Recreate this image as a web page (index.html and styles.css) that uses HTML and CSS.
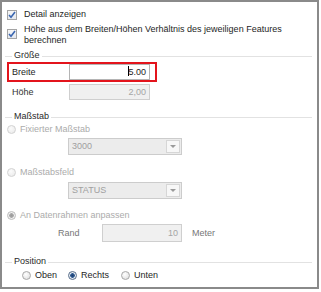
FILE: index.html
```html
<!DOCTYPE html>
<html lang="de">
<head>
  <meta charset="UTF-8">
  <title>Detail-Eigenschaften</title>
  <link rel="stylesheet" href="styles.css">
</head>
<body>
  <div class="panel">

    <!-- Checkboxes -->
    <div class="opt first">
      <span class="check"><svg width="8" height="8" viewBox="0 0 8 8"><path d="M1 4 L3 6.2 L7 1" fill="none" stroke="#3a66b0" stroke-width="1.6"/></svg></span>
      <span>Detail anzeigen</span>
    </div>
    <div class="opt multi">
      <span class="check"><svg width="8" height="8" viewBox="0 0 8 8"><path d="M1 4 L3 6.2 L7 1" fill="none" stroke="#3a66b0" stroke-width="1.6"/></svg></span>
      <span>Höhe aus dem Breiten/Höhen Verhältnis des jeweiligen Features berechnen</span>
    </div>

    <!-- Größe -->
    <div class="group g-size"><span class="legend">Größe</span></div>
    <div class="field highlight">
      <span class="label">Breite</span>
      <span class="input active"><span class="caret"></span>5.00</span>
    </div>
    <div class="field plain">
      <span class="label">Höhe</span>
      <span class="input disabled">2,00</span>
    </div>

    <!-- Maßstab -->
    <div class="group g-scale"><span class="legend">Maßstab</span></div>
    <div class="opt radio-row off r-fixed">
      <span class="radio"></span><span>Fixierter Maßstab</span>
    </div>
    <div class="combo c-first"><span class="combo-text">3000</span><span class="combo-btn"><span class="arrow"></span></span></div>
    <div class="opt radio-row off r-field">
      <span class="radio"></span><span>Maßstabsfeld</span>
    </div>
    <div class="combo c-second"><span class="combo-text">STATUS</span><span class="combo-btn"><span class="arrow"></span></span></div>
    <div class="opt radio-row off r-fit">
      <span class="radio checked-off"></span><span>An Datenrahmen anpassen</span>
    </div>
    <div class="margin-row">
      <span class="rand">Rand</span>
      <span class="input disabled wide">10</span>
      <span class="unit">Meter</span>
    </div>

    <!-- Position -->
    <div class="group g-pos"><span class="legend">Position</span></div>
    <div class="pos-row">
      <span class="pos"><span class="radio"></span>Oben</span>
      <span class="pos"><span class="radio checked"></span>Rechts</span>
      <span class="pos"><span class="radio"></span>Unten</span>
    </div>

  </div>
</body>
</html>
```

FILE: styles.css
```css
body {
  margin: 0;
  background: #fff;
  font-family: "Liberation Sans", Arial, sans-serif;
  font-size: 9px;
  line-height: 11px;
  color: #1e1e1e;
}
.panel {
  width: 315px;
  height: 285px;
  border: 2px solid #8a8a8a;
  background: #fff;
  overflow: hidden;
}

/* check rows */
.opt {
  display: flex;
  align-items: center;
  padding-left: 5px;
  height: 11px;
}
.opt.first {
  margin-top: 7px;
}
.opt.multi {
  margin-top: 4px;
  height: 22px;
  align-items: flex-start;
  padding-right: 34px;
}
.opt.multi .check {
  margin-top: 5px;
}
.check {
  width: 8px;
  height: 8px;
  border: 1px solid #a4a4a4;
  background: linear-gradient(#f6f6f6, #e4e8ef);
  margin-right: 7px;
  flex: none;
  display: flex;
}

/* group headers */
.group {
  height: 10px;
  display: flex;
  align-items: center;
  margin: 0 5px 0 3px;
}
.group::before {
  content: "";
  width: 7px;
  border-top: 1px solid #e2e2e2;
  margin-top: 3px;
}
.group::after {
  content: "";
  flex: 1;
  border-top: 1px solid #e2e2e2;
  margin-top: 3px;
}
.legend {
  padding: 0 2px;
  color: #2a2a2a;
}
.g-size { margin-top: 4px; }
.g-scale { margin-top: 11px; }
.g-pos { margin-top: 14px; }

/* text fields */
.field {
  display: flex;
  align-items: center;
}
.field.highlight {
  margin: 2px 0 0 5px;
  width: 142px;
  height: 16px;
  border: 2px solid #e3141c;
  padding: 0 1px 0 3px;
}
.field.plain {
  margin: 2px 0 0 10px;
  height: 16px;
}
.label {
  width: 57px;
  flex: none;
}
.field.plain .label {
  color: #333;
}
.input {
  box-sizing: border-box;
  width: 81px;
  height: 16px;
  border: 1px solid #b4b4b4;
  text-align: right;
  padding-right: 3px;
  line-height: 14px;
  background: #fff;
}
.input.disabled {
  background: #f0f0f0;
  border-color: #cfcfcf;
  color: #a5a5a5;
}
.caret {
  display: inline-block;
  width: 1px;
  height: 10px;
  background: #000;
  vertical-align: -1px;
  margin-right: -1px;
}

/* radios */
.radio {
  box-sizing: border-box;
  width: 9px;
  height: 9px;
  border-radius: 50%;
  border: 1px solid #a8a8a8;
  background: radial-gradient(circle at 40% 35%, #ffffff, #dadada);
  margin-right: 4px;
  flex: none;
  display: inline-block;
}
.radio.checked {
  border-color: #5a6f8c;
  background: radial-gradient(circle, #1f3f6e 0, #2e5a92 2px, #e9eef4 2.6px, #d6dbe2 100%);
}
.radio-row {
  color: #ababab;
}
.radio-row .radio {
  border-color: #d2d2d2;
  background: radial-gradient(circle at 40% 35%, #fbfbfb, #e8e8e8);
}
.radio-row .radio.checked-off {
  border-color: #bdbdbd;
  background: radial-gradient(circle, #9a9a9a 0, #a8a8a8 2px, #f2f2f2 2.6px, #e2e2e2 100%);
}
.r-fixed { margin-top: 3px; }
.r-field { margin-top: 12px; }
.r-fit { margin-top: 11px; }

/* combos */
.combo {
  box-sizing: border-box;
  margin-left: 66px;
  width: 114px;
  height: 17px;
  border: 1px solid #cccccc;
  background: #ececec;
  display: flex;
  align-items: center;
  color: #a0a0a0;
}
.c-first { margin-top: 3px; }
.c-second { margin-top: 4px; }
.combo-text {
  flex: 1;
  padding-left: 3px;
}
.combo-btn {
  box-sizing: border-box;
  width: 14px;
  height: 13px;
  margin-right: 1px;
  border: 1px solid #d6d6d6;
  background: #f7f7f7;
  display: flex;
  align-items: center;
  justify-content: center;
}
.arrow {
  width: 0;
  height: 0;
  border-left: 3px solid transparent;
  border-right: 3px solid transparent;
  border-top: 3px solid #9a9a9a;
}

/* rand row */
.margin-row {
  display: flex;
  align-items: center;
  margin-top: 3px;
  height: 18px;
}
.rand {
  margin-left: 56px;
  width: 44px;
  color: #777;
}
.input.wide {
  width: 80px;
  height: 18px;
  line-height: 16px;
}
.unit {
  margin-left: 10px;
  color: #777;
}

/* position */
.pos-row {
  display: flex;
  align-items: center;
  margin-top: 4px;
  height: 11px;
  padding-left: 20px;
}
.pos {
  display: flex;
  align-items: center;
}
.pos:nth-child(1) { width: 46px; }
.pos:nth-child(2) { width: 53px; }
```
